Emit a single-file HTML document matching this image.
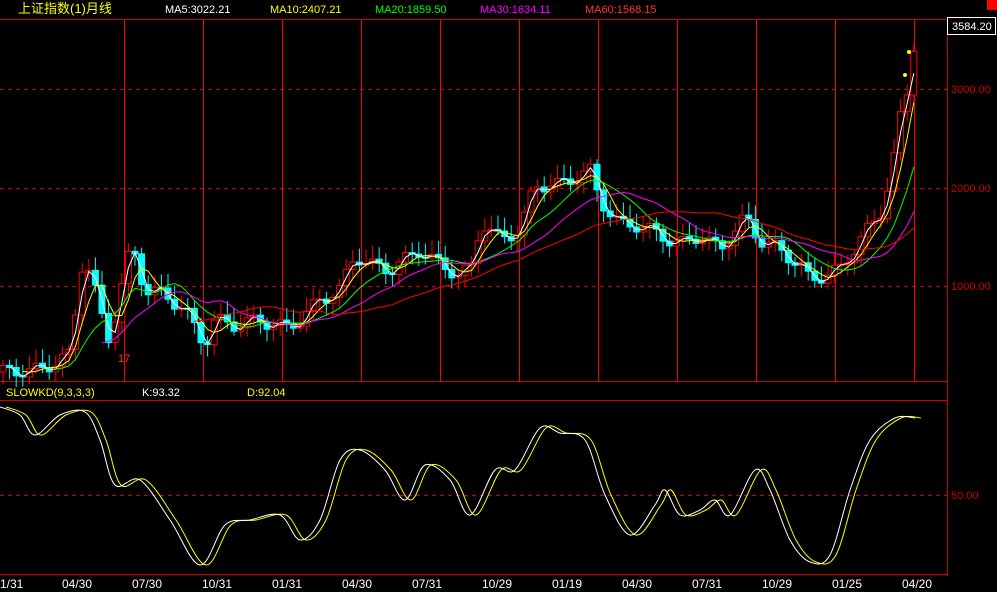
<!DOCTYPE html>
<html><head><meta charset="utf-8"><style>
html,body{margin:0;padding:0;background:#000;width:997px;height:592px;overflow:hidden}
svg{display:block}
text{font-family:"Liberation Sans","Noto Sans CJK SC",sans-serif;font-size:11px}
</style></head><body>
<svg id="s" width="997" height="592" viewBox="0 0 997 592" xmlns="http://www.w3.org/2000/svg">
<rect width="997" height="592" fill="#000"/>
<rect x="987" y="0" width="10" height="10" fill="#f00"/>
<text x="18" y="13" fill="#ff0" style="font-size:13px">上证指数(1)月线</text>
<text x="165" y="13" fill="#fff">MA5:3022.21</text>
<text x="270" y="13" fill="#ff0">MA10:2407.21</text>
<text x="375" y="13" fill="#0f0">MA20:1859.50</text>
<text x="480" y="13" fill="#f0f">MA30:1634.11</text>
<text x="585" y="13" fill="#f33">MA60:1568.15</text>
<line x1="0" y1="19.5" x2="997" y2="19.5" stroke="#c00"/>
<line x1="947.5" y1="19" x2="947.5" y2="576" stroke="#c00"/>
<line x1="0" y1="381.5" x2="947" y2="381.5" stroke="#c00"/>
<line x1="0" y1="400.5" x2="947" y2="400.5" stroke="#c00"/>
<line x1="0" y1="574.5" x2="947" y2="574.5" stroke="#c00"/>
<g stroke="#c00" stroke-dasharray="4,4">
<line x1="0" y1="89.5" x2="947" y2="89.5"/><line x1="0" y1="188.5" x2="947" y2="188.5"/><line x1="0" y1="286.5" x2="947" y2="286.5"/><line x1="0" y1="495.5" x2="947" y2="495.5"/>
</g>
<g id="v" stroke="#f00"></g>
<rect x="947.5" y="17.5" width="48" height="17" fill="#000" stroke="#fff"/>
<text x="952" y="30" fill="#fff">3584.20</text>
<g fill="#c00"><text x="951" y="93">3000.00</text><text x="951" y="192">2000.00</text><text x="951" y="290">1000.00</text><text x="951" y="499">50.00</text></g>
<text x="118" y="362" fill="#f33">17</text>
<text x="6" y="396" fill="#ff0">SLOWKD(9,3,3,3)</text>
<text x="142" y="396" fill="#fff">K:93.32</text>
<text x="247" y="396" fill="#ff0">D:92.04</text>
<g id="c"></g>
<g id="m" fill="none"></g>
<g id="lab" fill="#fff"></g>
</svg>
<script>
var N='http://www.w3.org/2000/svg';
function el(p,t,a){var e=document.createElementNS(N,t);for(var k in a)e.setAttribute(k,a[k]);document.getElementById(p).appendChild(e);return e;}
for(var x=124;x<=916;x+=79)el('v','line',{x1:x+.5,y1:20,x2:x+.5,y2:381});
var L=['1/31','04/30','07/30','10/31','01/31','04/30','07/31','10/29','01/19','04/30','07/31','10/29','01/25','04/20'];
L.forEach(function(t,i){var e=el('lab','text',{x:(i==0?0:62+70*(i-1)),y:588,style:'font-size:12px'});e.textContent=t;});
var P=[[0,372],[40,370],[70,355],[82,265],[90,270],[100,310],[108,340],[120,300],[125,260],[135,255],[145,290],[165,295],[185,310],[205,345],[215,320],[235,325],[260,320],[285,328],[300,320],[320,300],[340,290],[355,255],[370,265],[390,270],[420,250],[440,265],[460,275],[475,265],[480,220],[500,240],[520,230],[535,185],[560,185],[590,170],[600,200],[620,225],[640,225],[660,235],[680,245],[700,235],[720,250],[745,218],[760,240],[780,250],[800,265],[810,280],[840,270],[860,240],[880,215],[892,170],[900,120],[908,90],[915,35]];
function f(A,x){for(var i=1;i<A.length;i++)if(x<=A[i][0]){var a=A[i-1],b=A[i];return a[1]+(b[1]-a[1])*(x-a[0])/(b[0]-a[0]);}return A[A.length-1][1];}
var prev=f(P,0),cl=[];
for(var x=3;x<=916;x+=6.6){var c=f(P,x)+Math.sin(x*1.7)*7;cl.push([x,c]);var up=c<prev,t=Math.min(c,prev),h=Math.max(Math.abs(c-prev),1);var col=up?'#f00':'#0ff';
el('c','line',{x1:x,y1:t-4-Math.abs(Math.sin(x))*10,x2:x,y2:t+h+4+Math.abs(Math.cos(x))*8,stroke:col});
el('c','rect',{x:x-3,y:t,width:6,height:h,fill:up?'#000':'#0ff',stroke:col});prev=c;}
function ma(n,col){var d='';for(var i=n-1;i<cl.length;i++){var s=0;for(var j=0;j<n;j++)s+=cl[i-j][1];d+=(d?'L':'M')+cl[i][0].toFixed(1)+','+(s/n).toFixed(1);}el('m','path',{d:d,stroke:col});}
ma(2,'#fff');ma(4,'#ff0');ma(9,'#0f0');ma(16,'#f0f');ma(30,'#f00');
var K=[[0,407],[20,415],[35,435],[60,415],[85,412],[100,440],[115,485],[140,480],[170,520],[200,565],[225,525],[250,520],[280,515],[300,540],[320,520],[340,460],[360,450],[385,470],[405,500],[425,465],[450,480],[470,515],[495,470],[515,470],[540,428],[560,433],[585,440],[605,495],[630,535],[655,505],[665,490],[680,515],[700,510],[715,500],[730,515],[755,470],[770,490],[790,540],[810,562],[830,555],[850,490],[870,440],[895,418],[915,418]];
function spline(A,dx){var d='M'+(A[0][0]+dx)+','+A[0][1];for(var i=0;i<A.length-1;i++){var p0=A[Math.max(0,i-1)],p1=A[i],p2=A[i+1],p3=A[Math.min(A.length-1,i+2)];
d+='C'+(p1[0]+(p2[0]-p0[0])/6+dx).toFixed(1)+','+(p1[1]+(p2[1]-p0[1])/6).toFixed(1)+' '+(p2[0]-(p3[0]-p1[0])/6+dx).toFixed(1)+','+(p2[1]-(p3[1]-p1[1])/6).toFixed(1)+' '+(p2[0]+dx)+','+p2[1];}return d;}
var D=K.map(function(p,i){return [p[0],p[1]];});
el('m','path',{d:spline(D,6),stroke:'#ff0'});el('m','path',{d:spline(K,0),stroke:'#fff'});
el('m','circle',{cx:909,cy:52,r:2,fill:'#ff0'});el('m','circle',{cx:905,cy:75,r:2,fill:'#ff0'});
</script>
</body></html>
